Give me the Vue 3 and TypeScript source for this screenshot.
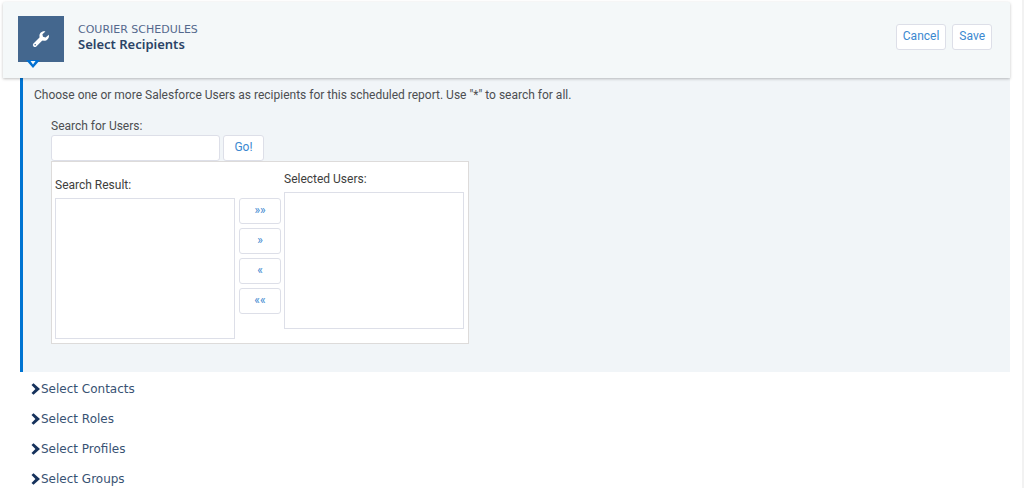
<script setup lang="ts">
import { ref } from 'vue'

const query = ref('')
const found = ref<string[]>([])
const chosen = ref<string[]>([])
const moves = [
  { label: '»»', title: 'Add all' },
  { label: '»', title: 'Add' },
  { label: '«', title: 'Remove' },
  { label: '««', title: 'Remove all' },
]
const sections = ['Select Contacts', 'Select Roles', 'Select Profiles', 'Select Groups']
</script>

<template>
  <div class="page">
    <header class="head">
      <div class="badge">
        <svg class="wrench" viewBox="0 0 18 18" aria-hidden="true">
          <path d="M2.9 15 L9.4 8.5" stroke="#fff" stroke-width="4" stroke-linecap="round" />
          <path d="M13.4 1.4 C10 .6 6.9 3.2 7.5 6.8 C8 10.4 11.6 11.8 14.6 10.2 C16.6 9 17.4 6.8 16.8 4.8 L13.6 7.6 L11 6.8 L10.4 4.2 Z" fill="#fff" />
          <circle cx="3.2" cy="14.7" r="0.8" fill="#44678e" />
        </svg>
        <svg class="pointer" viewBox="0 0 14 8" aria-hidden="true">
          <path d="M0 0 H14 L7 8 Z" fill="#0070d2" />
          <path d="M4.5 1 H9.5 L7 4.5 Z" fill="#f4f8f9" />
        </svg>
      </div>
      <div class="titles">
        <p class="over">COURIER SCHEDULES</p>
        <h1>Select Recipients</h1>
      </div>
      <div class="actions">
        <button type="button" class="btn">Cancel</button>
        <button type="button" class="btn">Save</button>
      </div>
    </header>

    <main class="panel">
      <p class="intro">Choose one or more Salesforce Users as recipients for this scheduled report. Use "*" to search for all.</p>
      <form class="finder" @submit.prevent>
        <label class="find-label" for="query">Search for Users:</label>
        <div class="find-row">
          <input id="query" v-model="query" class="field" type="text" />
          <button type="submit" class="btn go">Go!</button>
        </div>
        <div class="picker">
          <div class="side result">
            <label for="found">Search Result:</label>
            <select id="found" v-model="found" class="list tall" multiple></select>
          </div>
          <div class="moves">
            <button v-for="m in moves" :key="m.title" type="button" class="btn move" :aria-label="m.title">{{ m.label }}</button>
          </div>
          <div class="side">
            <label for="chosen">Selected Users:</label>
            <select id="chosen" v-model="chosen" class="list" multiple></select>
          </div>
        </div>
      </form>
    </main>

    <nav class="sections">
      <a v-for="s in sections" :key="s" href="#">
        <svg class="chev" viewBox="0 0 9 12" aria-hidden="true">
          <path d="M0.5 2 L2.5 0.3 L9 6 L2.5 11.7 L0.5 10 L4.4 6 Z" fill="#16325c" />
        </svg>
        <span>{{ s }}</span>
      </a>
    </nav>
  </div>
</template>

<style>
body {
  background: #fff;
  overflow: hidden;
}
</style>

<style scoped>
.page {
  box-sizing: border-box;
  min-height: 488px;
  padding: 2px 12px 0 3px;
  border-right: 2px solid #f2f2f2;
  font-family: Roboto, "Noto Sans", sans-serif;
  font-size: 12px;
  line-height: 16px;
  color: #4c4e51;
}
p, h1 {
  margin: 0;
}
.head {
  position: relative;
  display: flex;
  align-items: flex-start;
  box-sizing: border-box;
  min-height: 76px;
  padding: 14px 15px;
  background: #f4f8f9;
  border-radius: 2px 2px 0 0;
  box-shadow: 0 1px 3px rgba(0, 0, 0, 0.25);
}
.badge {
  position: relative;
  display: flex;
  align-items: center;
  justify-content: center;
  width: 46px;
  height: 46px;
  background: #44678e;
}
.wrench {
  width: 18px;
  height: 18px;
}
.pointer {
  position: absolute;
  left: 8px;
  top: 44px;
  width: 14px;
  height: 8px;
}
.titles {
  flex: 1;
  padding: 7px 0 0 14px;
}
.over {
  font-family: "DejaVu Sans", sans-serif;
  font-size: 11px;
  line-height: 14px;
  color: #54698d;
}
h1 {
  font-family: "Noto Sans", sans-serif;
  font-size: 13px;
  font-weight: 600;
  line-height: 14px;
  color: #2b4366;
}
.actions {
  display: flex;
  gap: 6px;
  padding: 8px 3px 0 0;
}
.btn {
  box-sizing: border-box;
  height: 26px;
  padding: 0 6px 2px;
  border: 1px solid #dddfe8;
  border-radius: 3px;
  background: #fff;
  color: #3b88d0;
  font: inherit;
  line-height: 16px;
}
.panel {
  min-height: 285px;
  margin-left: 17px;
  padding: 9px 11px 0;
  background: #f1f5f8;
  border-left: 3px solid #0074d2;
}
.finder {
  padding: 15px 0 0 17px;
}
.find-label {
  display: block;
}
.find-row {
  display: flex;
  gap: 3px;
  padding-top: 1px;
}
.field {
  box-sizing: border-box;
  width: 169px;
  height: 26px;
  border: 1px solid #dddfe8;
  border-radius: 3px;
  background: #fff;
  font: inherit;
}
.go {
  min-width: 41px;
}
.picker {
  display: flex;
  align-items: flex-start;
  box-sizing: border-box;
  width: fit-content;
  padding: 9px 4px 4px 3px;
  border: 1px solid #dddbda;
  background: #fff;
}
.side {
  display: flex;
  flex-direction: column;
  gap: 5px;
  color: #3e3e3c;
}
.result {
  padding-top: 6px;
}
.list {
  box-sizing: border-box;
  width: 180px;
  height: 137px;
  margin: 0;
  border: 1px solid #dddfe8;
  border-radius: 0;
  background: #fff;
}
.tall {
  height: 141px;
}
.moves {
  display: flex;
  flex-direction: column;
  gap: 4px;
  padding: 27px 3px 0 4px;
}
.move {
  width: 42px;
}
.sections {
  display: flex;
  flex-direction: column;
  gap: 14px;
  padding: 9px 0 0 28px;
}
.sections a {
  display: flex;
  align-items: center;
  gap: 1px;
  color: #385273;
  font-family: "DejaVu Sans", sans-serif;
  font-size: 12px;
  text-decoration: none;
}
.chev {
  width: 9px;
  height: 12px;
}
</style>
